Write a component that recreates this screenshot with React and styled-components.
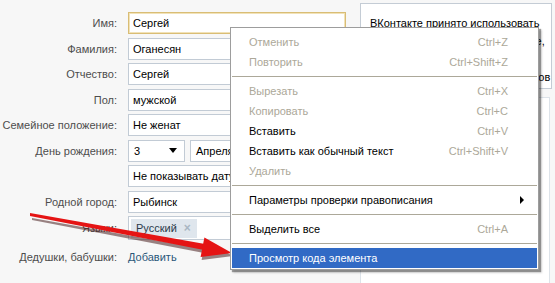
import React from 'react'
import styled, { createGlobalStyle } from 'styled-components'

const GlobalStyle = createGlobalStyle`
  html, body {
    margin: 0;
    padding: 0;
    background: #f7f7f7;
    font-family: Tahoma, "Liberation Sans", Arial, sans-serif;
    font-size: 11px;
    overflow: hidden;
  }
`

const profileRows = [
  { label: 'Имя:', value: 'Сергей', focused: true },
  { label: 'Фамилия:', value: 'Оганесян' },
  { label: 'Отчество:', value: 'Сергей' },
  { label: 'Пол:', value: 'мужской' },
  { label: 'Семейное положение:', value: 'Не женат' },
]

const menuGroups = [
  [
    { text: 'Отменить', key: 'Ctrl+Z', disabled: true },
    { text: 'Повторить', key: 'Ctrl+Shift+Z', disabled: true },
  ],
  [
    { text: 'Вырезать', key: 'Ctrl+X', disabled: true },
    { text: 'Копировать', key: 'Ctrl+C', disabled: true },
    { text: 'Вставить', key: 'Ctrl+V' },
    { text: 'Вставить как обычный текст', key: 'Ctrl+Shift+V' },
    { text: 'Удалить', disabled: true },
  ],
  [{ text: 'Параметры проверки правописания', submenu: true }],
  [{ text: 'Выделить все', key: 'Ctrl+A' }],
  [{ text: 'Просмотр кода элемента', active: true }],
]

const infoLines = [
  'ВКонтакте принято использовать',
  'настоящие имена, как в паспорте,',
  'чтобы друзья',
  'могли легко узнать вас и найти нов',
]

function DownArrow() {
  return (
    <svg width="8" height="5" viewBox="0 0 8 5">
      <polygon points="0,0 8,0 4,5" fill="#000" />
    </svg>
  )
}

function RightArrow() {
  return (
    <svg width="4" height="8" viewBox="0 0 4 8">
      <polygon points="0,0 4,4 0,8" fill="#000" />
    </svg>
  )
}

export default function App() {
  return (
    <Page>
      <GlobalStyle />
      <Form>
        {profileRows.map((r) => (
          <Row key={r.label}>
            <Label>{r.label}</Label>
            <Field $focused={r.focused}>{r.value}</Field>
          </Row>
        ))}
        <Row>
          <Label>День рождения:</Label>
          <Inline>
            <Select $width={57}>
              <span>3</span>
              <DownArrow />
            </Select>
            <Select $width={150}>
              <span>Апреля</span>
            </Select>
          </Inline>
        </Row>
        <Row>
          <Label />
          <Field>Не показывать дату рождения</Field>
        </Row>
        <Row>
          <Label>Родной город:</Label>
          <Field>Рыбинск</Field>
        </Row>
        <Row $tall>
          <Label>Языки:</Label>
          <Field $tokens>
            <Token>
              Русский<TokenClose>×</TokenClose>
            </Token>
          </Field>
        </Row>
        <Row $loose>
          <Label>Дедушки, бабушки:</Label>
          <Link>Добавить</Link>
        </Row>
      </Form>

      <Side>
        <InfoBox>
          {infoLines.map((l) => (
            <InfoLine key={l}>{l}</InfoLine>
          ))}
        </InfoBox>
        <LowerBox />
      </Side>

      <Arrow width="555" height="283" viewBox="0 0 555 283">
        <polygon points="31,215 204,246 203,250 31,217" fill="#4a2020" opacity="0.55" transform="translate(1,3)" />
        <polygon points="200.6,257.1 232,253 204.4,237.5" fill="#4a2020" opacity="0.55" transform="translate(1,3)" />
        <polygon points="30,213 205,244 204,250 30,216" fill="#e51414" />
        <polygon points="200.6,257.1 232,253 204.4,237.5" fill="#e51414" />
      </Arrow>

      <Menu>
        {menuGroups.map((group, gi) => (
          <React.Fragment key={gi}>
            {gi > 0 && <Separator />}
            {group.map((item) => (
              <MenuItem key={item.text} $disabled={item.disabled} $active={item.active}>
                <span>{item.text}</span>
                {item.key && <Shortcut>{item.key}</Shortcut>}
                {item.submenu && (
                  <Sub>
                    <RightArrow />
                  </Sub>
                )}
              </MenuItem>
            ))}
          </React.Fragment>
        ))}
      </Menu>
    </Page>
  )
}

const Page = styled.div`
  position: relative;
  width: 555px;
  height: 283px;
  display: flex;
  align-items: flex-start;
  overflow: hidden;
`

const Form = styled.div`
  width: 346px;
  padding-top: 12px;
  display: flex;
  flex-direction: column;
`

const Row = styled.div`
  display: grid;
  grid-template-columns: 117px 218px;
  column-gap: 11px;
  align-items: center;
  height: ${(p) => (p.$tall ? '24px' : '22px')};
  margin-bottom: 3.5px;
  margin-top: ${(p) => (p.$loose ? '2px' : '0')};
`

const Label = styled.div`
  text-align: right;
  color: #4d4d4d;
  white-space: nowrap;
`

const Field = styled.div`
  box-sizing: border-box;
  height: 100%;
  background: #fff;
  border: 1px solid ${(p) => (p.$focused ? '#d9bd75' : '#c2cbd5')};
  box-shadow: ${(p) => (p.$focused ? 'inset 0 0 0 1px #f1e2b8' : 'none')};
  display: flex;
  align-items: center;
  padding: ${(p) => (p.$tokens ? '0 2px' : '0 4px')};
  color: #000;
  white-space: nowrap;
  overflow: hidden;
`

const Inline = styled.div`
  display: flex;
  gap: 5px;
  height: 100%;
`

const Select = styled.div`
  box-sizing: border-box;
  width: ${(p) => p.$width}px;
  height: 100%;
  background: #fff;
  border: 1px solid #c2cbd5;
  display: flex;
  align-items: center;
  justify-content: space-between;
  padding: 0 7px 0 5px;
  color: #000;
`

const Token = styled.span`
  display: inline-flex;
  align-items: center;
  gap: 7px;
  height: 19px;
  padding: 0 6px 0 5px;
  background: #dfe6ed;
  color: #2b3a4a;
`

const TokenClose = styled.span`
  color: #a9b6c3;
  font-weight: bold;
  font-size: 12px;
`

const Link = styled.div`
  color: #2b587a;
`

const Side = styled.div`
  margin-left: 14px;
  padding-top: 3px;
  display: flex;
  flex-direction: column;
  gap: 8px;
`

const InfoBox = styled.div`
  box-sizing: border-box;
  width: 192px;
  height: 86px;
  background: #fff;
  border: 1px solid #c4ccd5;
  padding: 10px 9px;
  overflow: hidden;
  color: #000;
  line-height: 18px;
`

const InfoLine = styled.div`
  white-space: nowrap;
`

const LowerBox = styled.div`
  width: 188px;
  height: 200px;
  background: #fff;
  border: 1px solid #dde3e9;
`

const Arrow = styled.svg`
  position: absolute;
  left: 0;
  top: 0;
  pointer-events: none;
`

const Menu = styled.div`
  position: absolute;
  left: 230px;
  top: 27px;
  width: 309px;
  box-sizing: border-box;
  background: #fff;
  border: 1px solid #9d9d9d;
  box-shadow: 2px 2px 1px rgba(0, 0, 0, 0.35), 3px 3px 2px rgba(0, 0, 0, 0.15);
  padding: 4px 1px 1px;
`

const MenuItem = styled.div`
  position: relative;
  height: 20px;
  display: flex;
  align-items: center;
  padding: 0 29px 0 17px;
  color: ${(p) => (p.$active ? '#fff' : p.$disabled ? '#aca899' : '#000')};
  background: ${(p) => (p.$active ? '#316ac5' : 'transparent')};
  white-space: nowrap;
`

const Shortcut = styled.span`
  margin-left: auto;
  color: #aca899;
`

const Sub = styled.span`
  position: absolute;
  right: 13px;
  top: 6px;
  display: flex;
`

const Separator = styled.div`
  height: 1px;
  margin: 4px 0;
  background: #aca899;
`
